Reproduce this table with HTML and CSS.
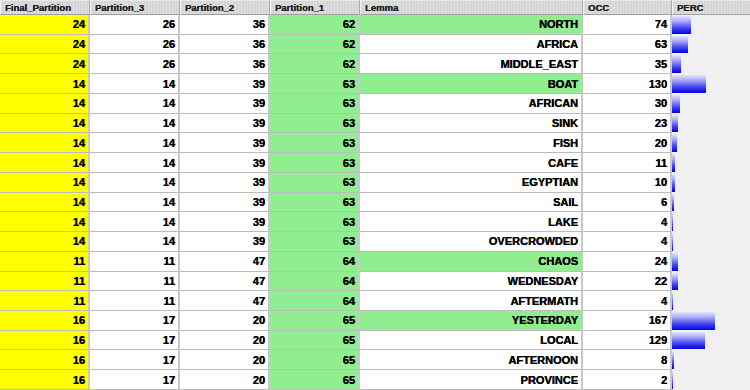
FILE: index.html
```html
<!DOCTYPE html>
<html>
<head>
<meta charset="utf-8">
<link rel="stylesheet" href="styles.css">
</head>
<body>
<div class="grid">
  <div class="row head">
    <div class="h">Final_Partition</div>
    <div class="h">Partition_3</div>
    <div class="h">Partition_2</div>
    <div class="h">Partition_1</div>
    <div class="h">Lemma</div>
    <div class="h">OCC</div>
    <div class="h last">PERC</div>
  </div>
  <div class="row"><div class="c y">24</div><div class="c">26</div><div class="c">36</div><div class="c g">62</div><div class="c g">NORTH</div><div class="c">74</div><div class="p"><div class="bar" style="width:19px"></div></div></div>
  <div class="row"><div class="c y">24</div><div class="c">26</div><div class="c">36</div><div class="c g">62</div><div class="c">AFRICA</div><div class="c">63</div><div class="p"><div class="bar" style="width:16px"></div></div></div>
  <div class="row"><div class="c y">24</div><div class="c">26</div><div class="c">36</div><div class="c g">62</div><div class="c">MIDDLE_EAST</div><div class="c">35</div><div class="p"><div class="bar" style="width:9px"></div></div></div>
  <div class="row"><div class="c y">14</div><div class="c">14</div><div class="c">39</div><div class="c g">63</div><div class="c g">BOAT</div><div class="c">130</div><div class="p"><div class="bar" style="width:34px"></div></div></div>
  <div class="row"><div class="c y">14</div><div class="c">14</div><div class="c">39</div><div class="c g">63</div><div class="c">AFRICAN</div><div class="c">30</div><div class="p"><div class="bar" style="width:8px"></div></div></div>
  <div class="row"><div class="c y">14</div><div class="c">14</div><div class="c">39</div><div class="c g">63</div><div class="c">SINK</div><div class="c">23</div><div class="p"><div class="bar" style="width:6px"></div></div></div>
  <div class="row"><div class="c y">14</div><div class="c">14</div><div class="c">39</div><div class="c g">63</div><div class="c">FISH</div><div class="c">20</div><div class="p"><div class="bar" style="width:5px"></div></div></div>
  <div class="row"><div class="c y">14</div><div class="c">14</div><div class="c">39</div><div class="c g">63</div><div class="c">CAFE</div><div class="c">11</div><div class="p"><div class="bar" style="width:3px"></div></div></div>
  <div class="row"><div class="c y">14</div><div class="c">14</div><div class="c">39</div><div class="c g">63</div><div class="c">EGYPTIAN</div><div class="c">10</div><div class="p"><div class="bar" style="width:3px"></div></div></div>
  <div class="row"><div class="c y">14</div><div class="c">14</div><div class="c">39</div><div class="c g">63</div><div class="c">SAIL</div><div class="c">6</div><div class="p"><div class="bar" style="width:2px"></div></div></div>
  <div class="row"><div class="c y">14</div><div class="c">14</div><div class="c">39</div><div class="c g">63</div><div class="c">LAKE</div><div class="c">4</div><div class="p"><div class="bar" style="width:1px"></div></div></div>
  <div class="row"><div class="c y">14</div><div class="c">14</div><div class="c">39</div><div class="c g">63</div><div class="c">OVERCROWDED</div><div class="c">4</div><div class="p"><div class="bar" style="width:1px"></div></div></div>
  <div class="row"><div class="c y">11</div><div class="c">11</div><div class="c">47</div><div class="c g">64</div><div class="c g">CHAOS</div><div class="c">24</div><div class="p"><div class="bar" style="width:6px"></div></div></div>
  <div class="row"><div class="c y">11</div><div class="c">11</div><div class="c">47</div><div class="c g">64</div><div class="c">WEDNESDAY</div><div class="c">22</div><div class="p"><div class="bar" style="width:6px"></div></div></div>
  <div class="row"><div class="c y">11</div><div class="c">11</div><div class="c">47</div><div class="c g">64</div><div class="c">AFTERMATH</div><div class="c">4</div><div class="p"><div class="bar" style="width:1px"></div></div></div>
  <div class="row"><div class="c y">16</div><div class="c">17</div><div class="c">20</div><div class="c g">65</div><div class="c g">YESTERDAY</div><div class="c">167</div><div class="p"><div class="bar" style="width:43px"></div></div></div>
  <div class="row"><div class="c y">16</div><div class="c">17</div><div class="c">20</div><div class="c g">65</div><div class="c">LOCAL</div><div class="c">129</div><div class="p"><div class="bar" style="width:33px"></div></div></div>
  <div class="row"><div class="c y">16</div><div class="c">17</div><div class="c">20</div><div class="c g">65</div><div class="c">AFTERNOON</div><div class="c">8</div><div class="p"><div class="bar" style="width:2px"></div></div></div>
  <div class="row"><div class="c y">16</div><div class="c">17</div><div class="c">20</div><div class="c g">65</div><div class="c">PROVINCE</div><div class="c">2</div><div class="p"><div class="bar" style="width:1px"></div></div></div>
</div>
</body>
</html>
```
FILE: styles.css
```css
html, body {
  margin: 0;
  padding: 0;
  background: #f0f0f0;
}
.grid {
  width: 750px;
  height: 390px;
  display: flex;
  flex-direction: column;
  font-family: "Liberation Sans", Arial, sans-serif;
  font-weight: bold;
  color: #000;
}
.row {
  flex: 1 1 0;
  display: grid;
  grid-template-columns: 90px 90px 90px 90px 223px 89px 1fr;
  min-height: 0;
}
.row.head {
  flex: 0 0 15px;
}
.h {
  background: #d5d5d5;
  background-image: repeating-linear-gradient(90deg, rgba(255,255,255,0.25) 0 1px, transparent 1px 3px);
  border-right: 1px solid #a8a8a8;
  border-left: 1px solid #f4f4f4;
  border-bottom: 1px solid #a0a0a0;
  border-top: 1px solid #e8e8e8;
  font-size: 9.5px;
  color: #222;
  padding-left: 4px;
  line-height: 13px;
  white-space: nowrap;
  overflow: hidden;
  text-shadow: 0.25px 0 0 #222;
}
.h.last {
  border-right: none;
}
.c {
  background: #fff;
  border-right: 2px solid #c8c8c8;
  border-bottom: 1px solid #bcbcbc;
  font-size: 11px;
  text-align: right;
  padding-right: 3px;
  display: flex;
  align-items: center;
  justify-content: flex-end;
  white-space: nowrap;
  text-shadow: 0.3px 0 0 #000;
}
.c.y {
  background: #ffff00;
}
.c.g {
  background: #90ee90;
}
.p {
  background: #f0f0f0;
  padding: 1px 0 1px 0;
  display: flex;
}
.bar {
  height: 100%;
  background: linear-gradient(to bottom, #e4e4ff 0%, #a8a8f8 30%, #4848f0 65%, #0000e8 100%);
}
```
